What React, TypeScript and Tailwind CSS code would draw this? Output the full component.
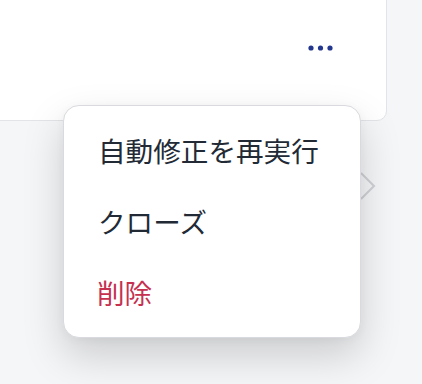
import React from "react";

export default function App() {
  return (
    <div
      className="relative w-[422px] h-[384px] overflow-hidden bg-[#f5f6f8]"
      style={{ fontFamily: '"Noto Sans CJK JP", "Noto Sans", sans-serif' }}
    >
      {/* card behind */}
      <div className="-mt-[12px] -ml-[12px] w-[399px] h-[133px] bg-white border border-[#e3e4e7] rounded-br-[10px] flex justify-end">
        <div className="mt-[54px] mr-[52px] h-[10px] flex items-center">
          <svg width="26" height="6" viewBox="0 0 26 6">
            <circle cx="3" cy="3" r="2.6" fill="#24378f" />
            <circle cx="12.5" cy="3" r="2.6" fill="#24378f" />
            <circle cx="22" cy="3" r="2.6" fill="#24378f" />
          </svg>
        </div>
      </div>
      {/* row behind with chevron */}
      <div className="flex justify-end pr-[45px] pt-[50px]">
        <svg width="18" height="30" viewBox="0 0 18 30">
          <polyline
            points="2,2 15,15 2,28"
            fill="none"
            stroke="#cfd1d5"
            strokeWidth="2"
          />
        </svg>
      </div>

      {/* dropdown menu */}
      <div className="absolute left-[63px] top-[105px] w-[298px] h-[233px] bg-white border border-[#d9dadf] rounded-[16px] shadow-[0_18px_40px_rgba(0,0,0,0.17),0_2px_10px_rgba(0,0,0,0.04)] py-[9px] flex flex-col">
        <div className="h-[71px] flex items-center pl-[34px] text-[27.6px] text-[#222a36] leading-none">
          自動修正を再実行
        </div>
        <div className="h-[71px] flex items-center pl-[34px] text-[27.6px] text-[#222a36] leading-none">
          クローズ
        </div>
        <div className="h-[71px] flex items-center pl-[33px] text-[27.6px] text-[#c5314f] leading-none">
          削除
        </div>
      </div>
    </div>
  );
}
